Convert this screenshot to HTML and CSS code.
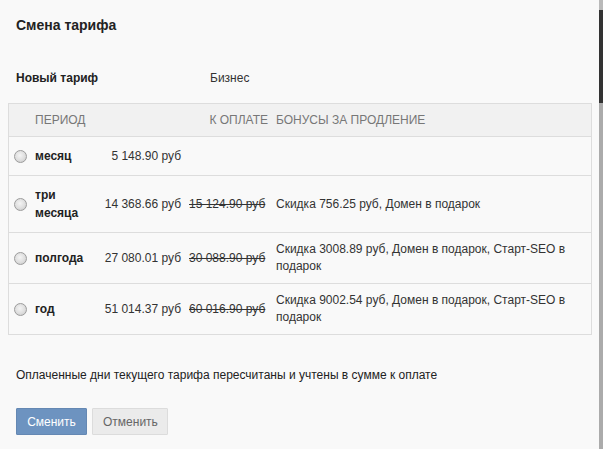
FILE: index.html
```html
<!DOCTYPE html>
<html lang="ru">
<head>
<meta charset="utf-8">
<title>Смена тарифа</title>
<link rel="stylesheet" href="styles.css">
</head>
<body>
<div class="screen">
  <div class="modal">
    <h1 class="title">Смена тарифа</h1>
    <div class="info">
      <span class="info-label">Новый тариф</span>
      <span class="info-value">Бизнес</span>
    </div>
    <div class="table">
      <div class="row head">
        <div class="c-radio"></div>
        <div class="c-period">ПЕРИОД</div>
        <div class="c-pay">К ОПЛАТЕ</div>
        <div class="c-bonus">БОНУСЫ ЗА ПРОДЛЕНИЕ</div>
      </div>
      <div class="row">
        <div class="c-radio"><span class="radio"></span></div>
        <div class="c-period">месяц</div>
        <div class="c-price">5 148.90 руб</div>
        <div class="c-old"></div>
        <div class="c-bonus"></div>
      </div>
      <div class="row">
        <div class="c-radio"><span class="radio"></span></div>
        <div class="c-period">три<br>месяца</div>
        <div class="c-price">14 368.66 руб</div>
        <div class="c-old"><s>15 124.90 руб</s></div>
        <div class="c-bonus">Скидка 756.25 руб, Домен в подарок</div>
      </div>
      <div class="row">
        <div class="c-radio"><span class="radio"></span></div>
        <div class="c-period">полгода</div>
        <div class="c-price">27 080.01 руб</div>
        <div class="c-old"><s>30 088.90 руб</s></div>
        <div class="c-bonus">Скидка 3008.89 руб, Домен в подарок, Старт-SEO в подарок</div>
      </div>
      <div class="row">
        <div class="c-radio"><span class="radio"></span></div>
        <div class="c-period">год</div>
        <div class="c-price">51 014.37 руб</div>
        <div class="c-old"><s>60 016.90 руб</s></div>
        <div class="c-bonus">Скидка 9002.54 руб, Домен в подарок, Старт-SEO в подарок</div>
      </div>
    </div>
    <p class="note">Оплаченные дни текущего тарифа пересчитаны и учтены в сумме к оплате</p>
    <div class="actions">
      <button class="btn btn-primary">Сменить</button>
      <button class="btn btn-default">Отменить</button>
    </div>
  </div>
  <div class="backdrop"></div>
</div>
</body>
</html>
```

FILE: styles.css
```css
html, body {
  margin: 0;
  padding: 0;
  height: 100%;
}
body {
  font-family: "Liberation Sans", Arial, sans-serif;
  font-size: 12px;
  color: #333;
  background: #f9f9f9;
}
.screen {
  display: flex;
  height: 449px;
  overflow: hidden;
}
.modal {
  flex: 0 0 599px;
  box-sizing: border-box;
  background: #f9f9f9;
  padding: 16px 0 0 8px;
}
.backdrop {
  flex: 1;
  background: linear-gradient(to bottom, #b9b9b9 0, #b9b9b9 10px, #333 10px, #333 103px, #ababab 103px);
}
.title {
  margin: 0;
  padding-left: 8px;
  font-size: 14px;
  line-height: 18px;
  font-weight: bold;
  color: #222;
}
.info {
  display: flex;
  margin-top: 36px;
  padding-left: 8px;
  line-height: 17px;
}
.info-label {
  width: 194px;
  font-weight: bold;
  color: #222;
}
.table {
  margin-top: 16px;
  width: 584px;
  border: 1px solid #ddd;
  box-sizing: border-box;
}
.row {
  display: grid;
  grid-template-columns: 22px 67px 87px 87px 1fr;
  align-items: center;
  border-top: 1px solid #ddd;
  line-height: 17px;
}
.row.head {
  border-top: 0;
  background: #f1f1f1;
  color: #777;
  height: 32px;
}
.row.head .c-period {
  font-weight: normal;
  color: #777;
  padding: 0 0 0 4px;
}
.row.head .c-pay {
  grid-column: 3 / 5;
  text-align: right;
  padding-right: 4px;
}
.c-radio {
  display: flex;
  justify-content: center;
  padding-left: 1px;
}
.radio {
  display: block;
  width: 11px;
  height: 11px;
  border-radius: 50%;
  border: 1px solid #9c9c9c;
  background: radial-gradient(circle at 45% 40%, #f4f4f4 0, #dedede 55%, #c4c4c4 100%);
}
.c-period {
  padding: 10px 0 10px 4px;
  font-weight: bold;
  line-height: 18px;
  color: #222;
}
.c-price {
  text-align: right;
  padding-right: 4px;
  white-space: nowrap;
}
.c-old {
  padding-left: 4px;
  white-space: nowrap;
}
.c-old s {
  text-decoration-thickness: 1px;
  color: #333;
}
.c-bonus {
  padding: 8px 20px 8px 4px;
}
.row.head .c-bonus {
  padding: 0 0 0 4px;
}
.note {
  margin: 32px 0 0;
  padding-left: 8px;
  line-height: 17px;
  color: #222;
}
.actions {
  display: flex;
  gap: 5px;
  margin-top: 24px;
  padding-left: 8px;
}
.btn {
  font-family: "Liberation Sans", Arial, sans-serif;
  font-size: 12px;
  height: 27px;
  padding: 0 10px;
  border-radius: 1px;
  cursor: pointer;
}
.btn-primary {
  width: 71px;
  background: #6d93c0;
  border: 1px solid #6588b3;
  color: #fff;
}
.btn-default {
  width: 76px;
  background: #ebebeb;
  border: 1px solid #dcdcdc;
  color: #666;
}
```
